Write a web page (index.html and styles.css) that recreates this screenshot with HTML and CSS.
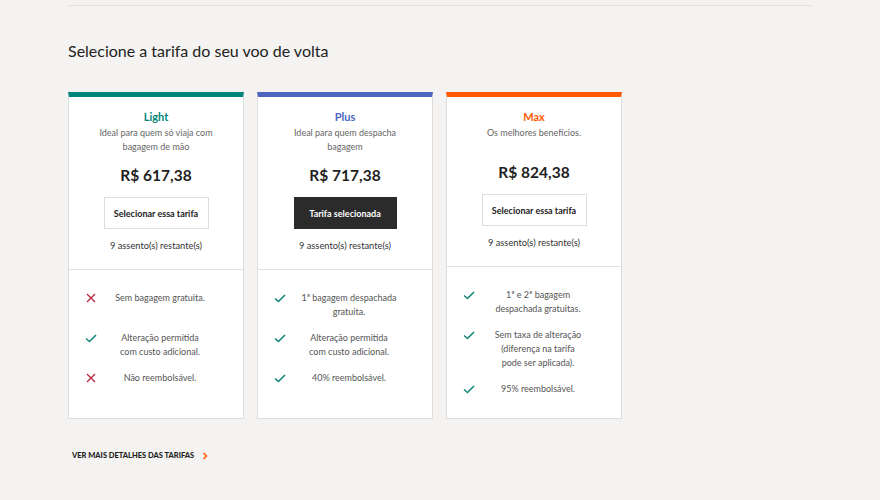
FILE: index.html
```html
<!DOCTYPE html>
<html lang="pt-BR">
  <head>
    <meta charset="UTF-8" />
    <meta name="viewport" content="width=device-width, initial-scale=1.0" />
    <title>Tarifas</title>
    <link rel="stylesheet" href="styles.css">
  </head>
  <body>
    <main class="page">
      <div class="rule"></div>
      <h1 class="title">Selecione a tarifa do seu voo de volta</h1>

      <div class="fares">
        <section class="fare fare-light">
          <div class="fare-head">
            <h2 class="fare-name">Light</h2>
            <p class="fare-desc">Ideal para quem só viaja com<br>bagagem de mão</p>
            <div class="fare-price">R$ 617,38</div>
            <button class="fare-btn">Selecionar essa tarifa</button>
            <p class="fare-seats">9 assento(s) restante(s)</p>
          </div>
          <ul class="fare-features">
            <li>
              <svg class="icon no" viewBox="0 0 12 12"><path d="M2 2 L10 10 M10 2 L2 10" /></svg>
              <span class="text">Sem bagagem gratuita.</span>
            </li>
            <li>
              <svg class="icon yes" viewBox="0 0 12 12"><path d="M1 6.5 L4.5 9.5 L11 3" /></svg>
              <span class="text">Alteração permitida<br>com custo adicional.</span>
            </li>
            <li>
              <svg class="icon no" viewBox="0 0 12 12"><path d="M2 2 L10 10 M10 2 L2 10" /></svg>
              <span class="text">Não reembolsável.</span>
            </li>
          </ul>
        </section>

        <section class="fare fare-plus">
          <div class="fare-head">
            <h2 class="fare-name">Plus</h2>
            <p class="fare-desc">Ideal para quem despacha<br>bagagem</p>
            <div class="fare-price">R$ 717,38</div>
            <button class="fare-btn selected">Tarifa selecionada</button>
            <p class="fare-seats">9 assento(s) restante(s)</p>
          </div>
          <ul class="fare-features">
            <li>
              <svg class="icon yes" viewBox="0 0 12 12"><path d="M1 6.5 L4.5 9.5 L11 3" /></svg>
              <span class="text">1ª bagagem despachada<br>gratuita.</span>
            </li>
            <li>
              <svg class="icon yes" viewBox="0 0 12 12"><path d="M1 6.5 L4.5 9.5 L11 3" /></svg>
              <span class="text">Alteração permitida<br>com custo adicional.</span>
            </li>
            <li>
              <svg class="icon yes" viewBox="0 0 12 12"><path d="M1 6.5 L4.5 9.5 L11 3" /></svg>
              <span class="text">40% reembolsável.</span>
            </li>
          </ul>
        </section>

        <section class="fare fare-max">
          <div class="fare-head">
            <h2 class="fare-name">Max</h2>
            <p class="fare-desc">Os melhores benefícios.</p>
            <div class="fare-price">R$ 824,38</div>
            <button class="fare-btn">Selecionar essa tarifa</button>
            <p class="fare-seats">9 assento(s) restante(s)</p>
          </div>
          <ul class="fare-features">
            <li>
              <svg class="icon yes" viewBox="0 0 12 12"><path d="M1 6.5 L4.5 9.5 L11 3" /></svg>
              <span class="text">1ª e 2ª bagagem<br>despachada gratuitas.</span>
            </li>
            <li>
              <svg class="icon yes" viewBox="0 0 12 12"><path d="M1 6.5 L4.5 9.5 L11 3" /></svg>
              <span class="text">Sem taxa de alteração<br>(diferença na tarifa<br>pode ser aplicada).</span>
            </li>
            <li>
              <svg class="icon yes" viewBox="0 0 12 12"><path d="M1 6.5 L4.5 9.5 L11 3" /></svg>
              <span class="text">95% reembolsável.</span>
            </li>
          </ul>
        </section>
      </div>

      <a class="more-link" href="#">Ver mais detalhes das tarifas
        <svg class="chevron" viewBox="0 0 6 8"><path d="M1.5 1 L4.5 4 L1.5 7" /></svg>
      </a>
    </main>
  </body>
</html>
```

FILE: styles.css
```css
* {
  box-sizing: border-box;
}

body {
  margin: 0;
  background-color: #f4f3f1;
  font-family: Lato, "Open Sans", Arial, sans-serif;
  color: #222;
}

p, h1, h2, ul {
  margin: 0;
  padding: 0;
}

.page {
  width: 744px;
  margin-left: 68px;
}

.rule {
  margin-top: 5px;
  height: 1px;
  background-color: #e2e1de;
}

.title {
  margin-top: 35px;
  font-size: 16px;
  line-height: 20px;
  font-weight: 400;
  color: #222;
}

.fares {
  display: flex;
  gap: 13px;
  margin-top: 31px;
}

.fare {
  width: 176px;
  background-color: #fff;
  border: 1px solid #ddd;
  border-top: 5px solid #00857a;
}

.fare-plus {
  border-top-color: #4c66c2;
}

.fare-max {
  border-top-color: #ff5a00;
}

.fare-head {
  padding: 13px 10px 16px;
  text-align: center;
  border-bottom: 1px solid #e2e2e2;
}

.fare-name {
  font-size: 11px;
  line-height: 14px;
  font-weight: 700;
  color: #00857a;
}

.fare-plus .fare-name {
  color: #4c66c2;
}

.fare-max .fare-name {
  color: #ff5a00;
}

.fare-desc {
  margin-top: 2px;
  min-height: 25px;
  font-size: 9px;
  line-height: 14px;
  color: #666;
}

.fare-price {
  margin-top: 11px;
  font-size: 15.5px;
  line-height: 20px;
  font-weight: 700;
  color: #1f1f1f;
}

.fare-btn {
  display: block;
  margin: 12px auto 0;
  width: 105px;
  height: 32px;
  padding: 0;
  background-color: #fff;
  border: 1px solid #ddd;
  font-family: inherit;
  font-size: 9px;
  font-weight: 700;
  color: #222;
}

.fare-btn.selected {
  width: 103px;
  background-color: #2b2b2b;
  border-color: #2b2b2b;
  color: #fff;
}

.fare-seats {
  margin-top: 10px;
  font-size: 9.3px;
  line-height: 14px;
  color: #333;
}

.fare-features {
  list-style: none;
  padding: 21px 28px 8px 16px;
  display: flex;
  flex-direction: column;
  gap: 12px;
}

.fare-features li {
  display: flex;
  align-items: flex-start;
  min-height: 28px;
}

.fare-features .text {
  flex: 1;
  margin-left: 8px;
  text-align: center;
  font-size: 9px;
  line-height: 14px;
  color: #555;
}

.icon {
  flex: none;
  width: 12px;
  height: 12px;
  margin-top: 1px;
  fill: none;
  stroke-width: 1.6;
}

.icon.yes {
  stroke: #13877a;
}

.icon.no {
  stroke: #b3263b;
  stroke-width: 1.3;
}

.more-link {
  display: inline-flex;
  align-items: center;
  margin: 31px 0 0 4px;
  font-size: 7.5px;
  line-height: 12px;
  font-weight: 900;
  text-transform: uppercase;
  text-decoration: none;
  color: #1f1f1f;
}

.chevron {
  margin-left: 8px;
  width: 6px;
  height: 8px;
  fill: none;
  stroke: #ff5a00;
  stroke-width: 1.6;
}
```
